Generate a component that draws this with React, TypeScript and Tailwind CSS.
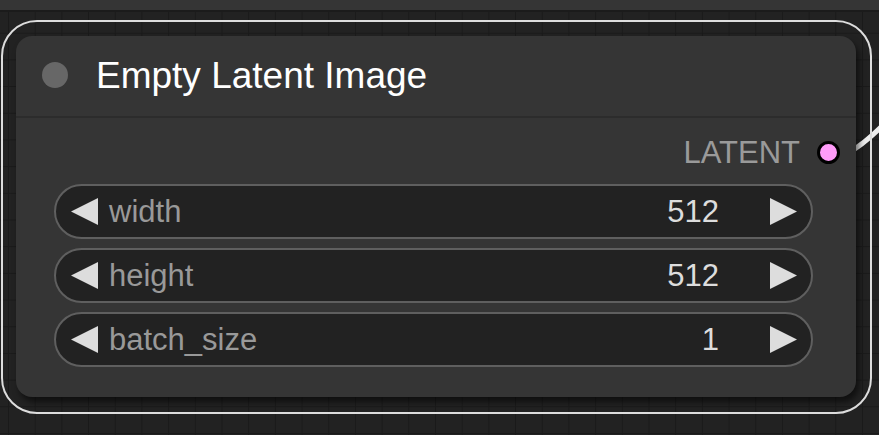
const font = { fontFamily: '"Liberation Sans", Arial, sans-serif' };

type Widget = { label: string; value: string };

const widgets: Widget[] = [
  { label: 'width', value: '512' },
  { label: 'height', value: '512' },
  { label: 'batch_size', value: '1' },
];

function Arrow({ dir }: { dir: 'left' | 'right' }) {
  return (
    <svg width="27" height="27" viewBox="0 0 27 27" className="shrink-0">
      <polygon points={dir === 'left' ? '27,0 27,27 0,13.5' : '0,0 0,27 27,13.5'} fill="#dddddd" />
    </svg>
  );
}

function NumberWidget({ label, value }: Widget) {
  return (
    <div className="flex h-[55px] items-center rounded-full border-2 border-[#5f5f5f] bg-[#222222] pl-[15px] pr-[14px]">
      <Arrow dir="left" />
      <span className="ml-[11px] text-[31px] leading-none text-[#999999]">{label}</span>
      <span className="ml-auto text-[31px] leading-none text-[#dddddd]">{value}</span>
      <span className="ml-[51px] flex">
        <Arrow dir="right" />
      </span>
    </div>
  );
}

export default function App() {
  return (
    <div
      className="relative h-[435px] w-[879px] overflow-hidden bg-[#222222] bg-[linear-gradient(to_right,#1a1a1a_1px,transparent_1px),linear-gradient(to_bottom,#1a1a1a_1px,transparent_1px)] bg-[size:26.7px_26.7px] bg-[position:8px_6px]"
      style={font}
    >
      <div className="h-[12px] border-b-2 border-[#1b1b1b] bg-[#353535]" />

      {/* wire leaving the LATENT output */}
      <svg className="absolute left-0 top-0" width="879" height="435" viewBox="0 0 879 435">
        <path d="M848 153 Q864 144 882 126" stroke="#eeeeee" strokeWidth="5" fill="none" />
      </svg>

      <div className="relative ml-[1px] mt-[8px] h-[394px] w-[871px] rounded-[36px] border-2 border-[#dddddd] pl-[13px] pt-[14px]">
        <div className="flex h-[361px] w-[840px] flex-col rounded-[16px] bg-[#353535] shadow-[3px_5px_6px_rgba(0,0,0,0.55)]">
          <div className="flex h-[82px] items-center border-b-2 border-[#2c2c2c] pb-[2px] pl-[26px]">
            <div className="h-[26px] w-[26px] rounded-full bg-[#676767]" />
            <span className="ml-[28px] text-[37px] leading-none text-white">Empty Latent Image</span>
          </div>

          <div className="mt-[14px] flex h-[40px] items-center justify-end pr-[16px]">
            <span className="text-[31px] leading-none text-[#9a9a9a]">LATENT</span>
            <div className="ml-[17px] h-[23px] w-[23px] rounded-full border-[3px] border-black bg-[#ff9cf9]" />
          </div>

          <div className="ml-[38px] mr-[43px] mt-[12px] flex flex-col gap-[9px]">
            {widgets.map((w) => (
              <NumberWidget key={w.label} {...w} />
            ))}
          </div>
        </div>
      </div>
    </div>
  );
}
